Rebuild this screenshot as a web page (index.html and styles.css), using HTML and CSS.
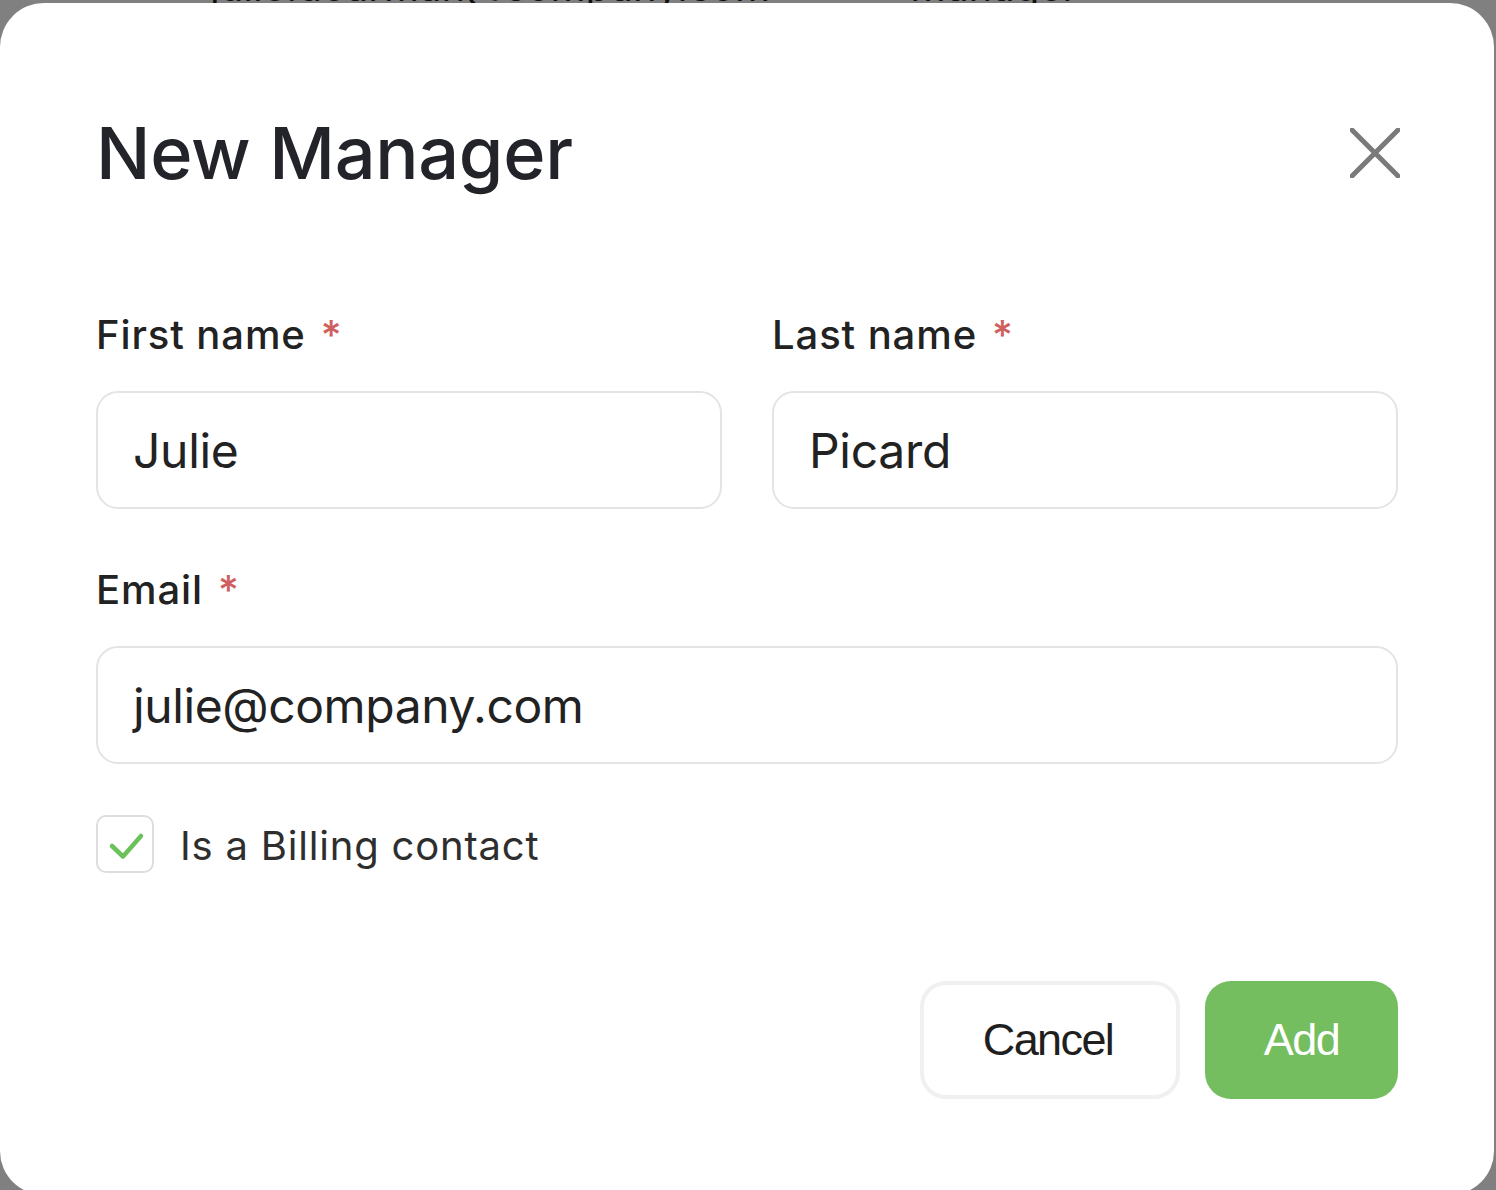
FILE: index.html
```html
<!DOCTYPE html>
<html lang="en">
<head>
<meta charset="utf-8">
<title>New Manager</title>
<link rel="stylesheet" href="styles.css">
</head>
<body>
<div class="page">
  <div class="page-row">
    <span class="page-cell page-email">julie.dearman@company.com</span>
    <span class="page-cell page-role">Manager</span>
  </div>
</div>
<div class="overlay">
  <div class="modal" role="dialog" aria-labelledby="modal-title">
    <div class="modal-header">
      <h1 class="modal-title" id="modal-title">New Manager</h1>
      <button class="close-btn" type="button" aria-label="Close">
        <svg width="50" height="50" viewBox="0 0 50 50" aria-hidden="true">
          <path d="M2 2 L48 48 M48 2 L2 48" stroke="#7a7a7a" stroke-width="5" stroke-linecap="round" fill="none"/>
        </svg>
      </button>
    </div>
    <form class="form">
      <div class="field">
        <label class="label" for="first">First name<span class="req">*</span></label>
        <div class="input" id="first">Julie</div>
      </div>
      <div class="field">
        <label class="label" for="last">Last name<span class="req">*</span></label>
        <div class="input" id="last">Picard</div>
      </div>
      <div class="field field-wide">
        <label class="label" for="email">Email<span class="req">*</span></label>
        <div class="input input-email" id="email">julie@company.com</div>
      </div>
    </form>
    <div class="check-row">
      <span class="checkbox">
        <svg width="58" height="58" viewBox="0 0 58 58" aria-hidden="true">
          <path d="M16 31 L27 41.5 L45 21" stroke="#6cc25a" stroke-width="4.5" stroke-linecap="round" stroke-linejoin="round" fill="none"/>
        </svg>
      </span>
      <span class="check-label">Is a Billing contact</span>
    </div>
    <div class="actions">
      <button class="btn btn-cancel" type="button">Cancel</button>
      <button class="btn btn-add" type="button">Add</button>
    </div>
  </div>
</div>
</body>
</html>
```

FILE: styles.css
```css
* { box-sizing: border-box; }

html, body {
  margin: 0;
  padding: 0;
  height: 100%;
  overflow: hidden;
}

body {
  background: #ffffff;
  font-family: Inter, "Noto Sans", sans-serif;
}

.page {
  height: 100%;
}

.page-row {
  display: flex;
  margin-top: -33px;
  font-size: 40px;
  line-height: 40px;
  color: #1e1e1e;
}

.page-email {
  margin-left: 210px;
  width: 700px;
}

.overlay {
  position: fixed;
  inset: 0;
  background: rgba(0, 2, 0, 0.5);
}

.modal {
  margin-top: 3px;
  width: 1494px;
  height: 1192px;
  background: #ffffff;
  border-radius: 44px;
  padding: 114px 96px 0 96px;
}

.modal-header {
  display: flex;
  align-items: center;
  justify-content: space-between;
}

.modal-title {
  margin: 0;
  font-size: 72px;
  line-height: 72px;
  font-weight: 500;
  color: #222429;
  letter-spacing: -0.3px;
}

.close-btn {
  border: 0;
  background: none;
  padding: 0;
  margin-right: -2px;
  width: 50px;
  height: 50px;
  display: flex;
}

.form {
  margin-top: 126px;
  display: grid;
  grid-template-columns: 1fr 1fr;
  column-gap: 50px;
  row-gap: 61px;
}

.field {
  display: flex;
  flex-direction: column;
  gap: 36px;
}

.field-wide {
  grid-column: span 2;
}

.label {
  display: block;
  height: 40px;
  font-size: 40px;
  line-height: 40px;
  font-weight: 500;
  color: #222222;
  letter-spacing: 0.9px;
}

.req {
  color: #d0605e;
  margin-left: 15px;
}

.input {
  height: 118px;
  border: 2px solid #e4e4e4;
  border-radius: 22px;
  padding: 0 35px;
  display: flex;
  align-items: center;
  font-size: 48px;
  color: #222222;
  letter-spacing: -0.3px;
}

.input-email {
  letter-spacing: -0.4px;
}

.check-row {
  margin-top: 51px;
  display: flex;
  align-items: center;
  gap: 26px;
}

.checkbox {
  width: 58px;
  height: 58px;
  border: 2px solid #dedede;
  border-radius: 10px;
  position: relative;
}

.checkbox svg {
  position: absolute;
  left: -2px;
  top: -2px;
}

.check-label {
  font-size: 40px;
  line-height: 40px;
  padding-top: 4px;
  color: #2e2e2e;
  letter-spacing: 0.8px;
}

.actions {
  margin-top: 108px;
  display: flex;
  justify-content: flex-end;
  gap: 25px;
}

.btn {
  height: 118px;
  border-radius: 26px;
  font-family: "Liberation Sans", Arial, sans-serif;
  font-size: 45px;
  letter-spacing: -1.6px;
  cursor: pointer;
}

.btn-cancel {
  width: 260px;
  background: #ffffff;
  border: 4px solid #f0f0f0;
  color: #1f1f1f;
  padding-right: 10px;
}

.btn-add {
  width: 193px;
  background: #75be5f;
  border: 0;
  color: #ffffff;
}
```
